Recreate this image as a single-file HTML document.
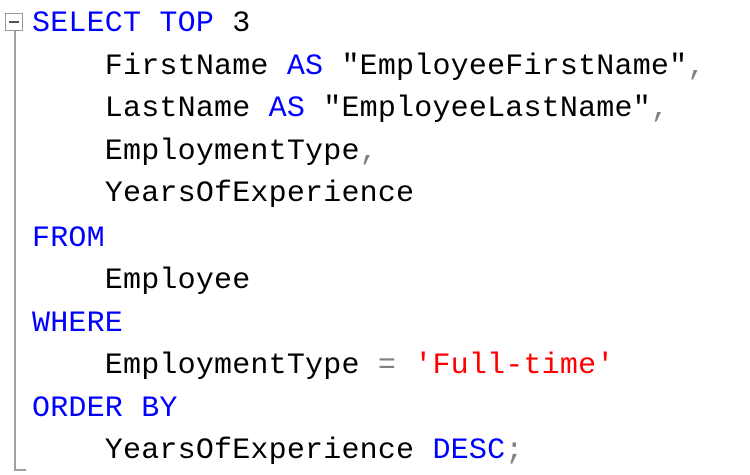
<!DOCTYPE html>
<html><head><style>
body{margin:0;width:750px;height:475px;background:#fff;position:relative;overflow:hidden}
.l{position:absolute;left:32px;font-family:"Liberation Mono",monospace;font-size:30px;letter-spacing:0.2px;white-space:pre;line-height:42px;color:#000}
.k{color:#0000ff}.s{color:#ff0000}.g{color:#808080}
</style></head><body>
<div style="position:absolute;left:5px;top:13px;width:18px;height:18px;border:1px solid #999;box-sizing:border-box"></div>
<div style="position:absolute;left:9px;top:21px;width:10px;height:2px;background:#555"></div>
<div style="position:absolute;left:14px;top:31px;width:2px;height:440px;background:#a0a0a0"></div>
<div style="position:absolute;left:14px;top:469px;width:12px;height:2px;background:#a0a0a0"></div>
<div class="l" style="top:3px"><span class="k">SELECT TOP</span> 3</div>
<div class="l" style="top:46px">    FirstName <span class="k">AS</span> "EmployeeFirstName"<span class="g">,</span></div>
<div class="l" style="top:88px">    LastName <span class="k">AS</span> "EmployeeLastName"<span class="g">,</span></div>
<div class="l" style="top:131px">    EmploymentType<span class="g">,</span></div>
<div class="l" style="top:173px">    YearsOfExperience</div>
<div class="l" style="top:218px"><span class="k">FROM</span></div>
<div class="l" style="top:260px">    Employee</div>
<div class="l" style="top:303px"><span class="k">WHERE</span></div>
<div class="l" style="top:345px">    EmploymentType <span class="g">=</span> <span class="s">'Full-time'</span></div>
<div class="l" style="top:388px"><span class="k">ORDER BY</span></div>
<div class="l" style="top:430px">    YearsOfExperience <span class="k">DESC</span><span class="g">;</span></div>
</body></html>
